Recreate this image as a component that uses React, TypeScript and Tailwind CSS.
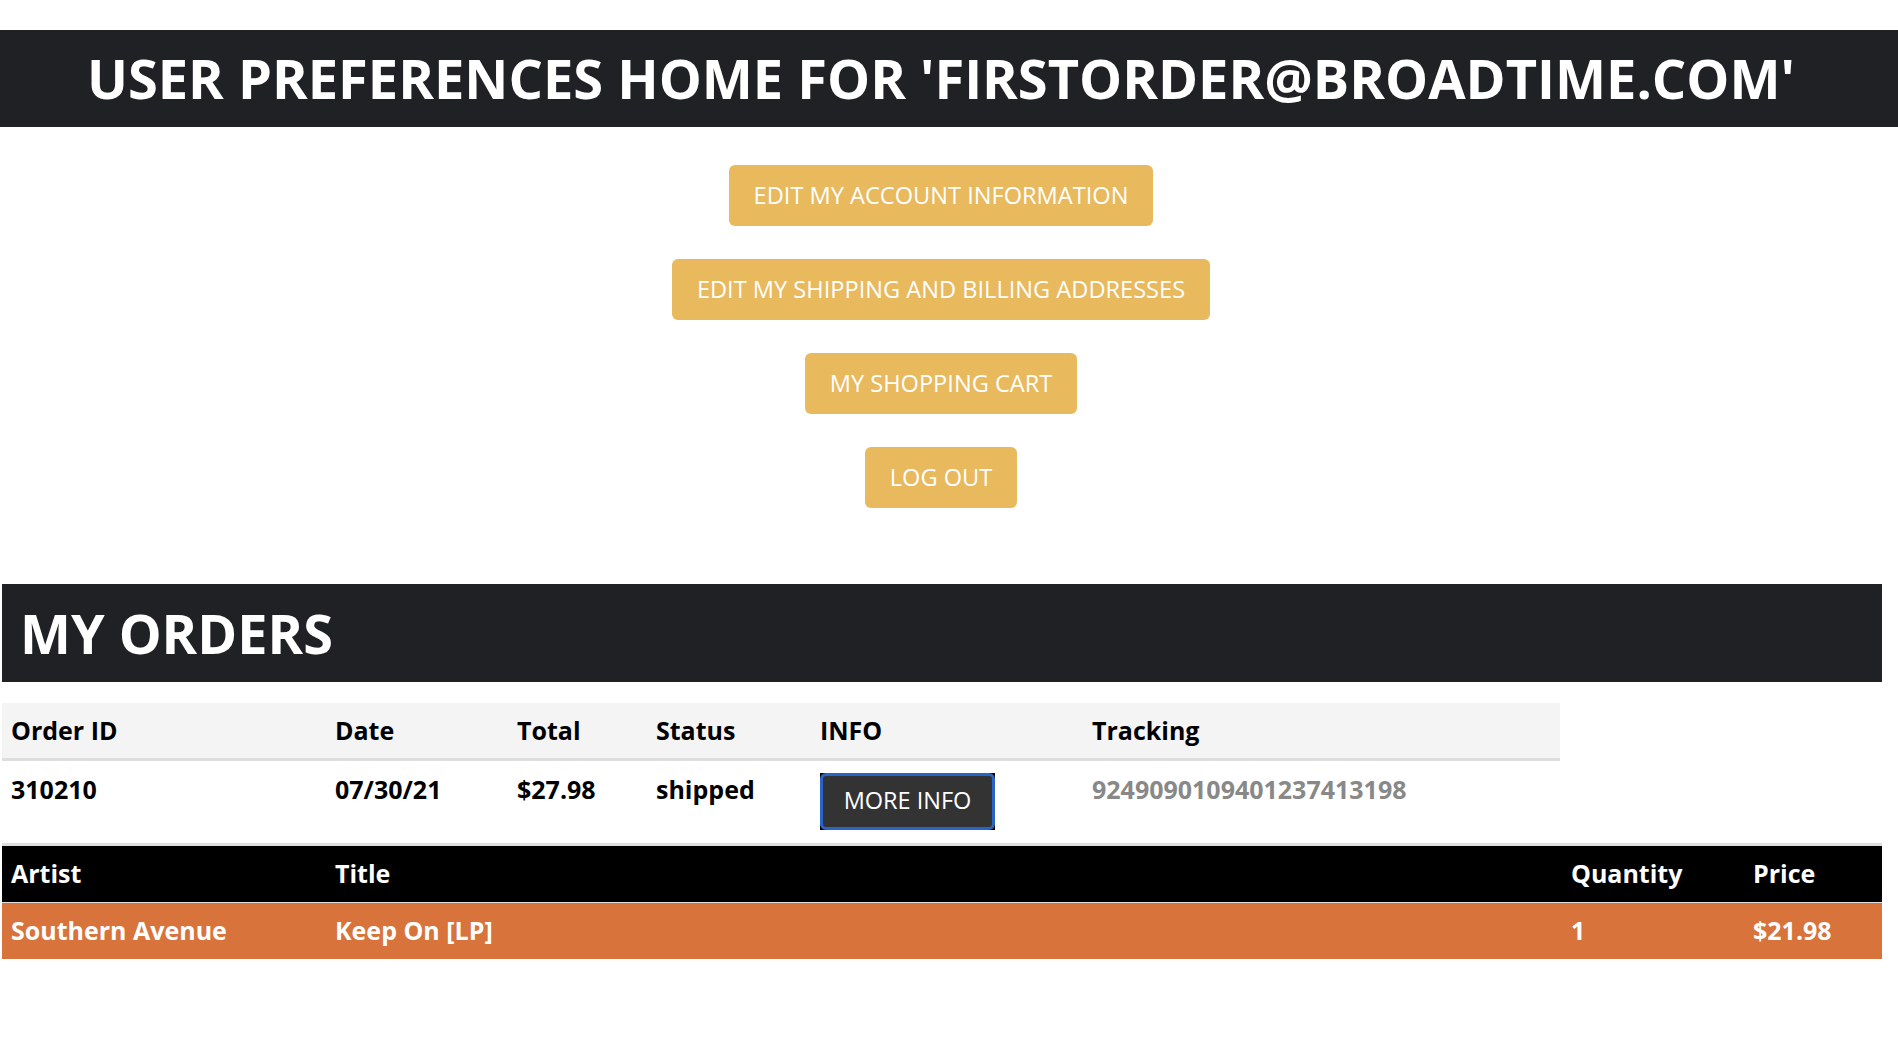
const menu = [
  "EDIT MY ACCOUNT INFORMATION",
  "EDIT MY SHIPPING AND BILLING ADDRESSES",
  "MY SHOPPING CART",
  "LOG OUT",
];

function OrdersTable() {
  return (
    <table className="table-fixed border-collapse text-[25px] font-bold text-black w-[1558px]">
      <colgroup>
        <col className="w-[324px]" />
        <col className="w-[182px]" />
        <col className="w-[139px]" />
        <col className="w-[164px]" />
        <col className="w-[272px]" />
        <col className="w-[477px]" />
      </colgroup>
      <thead>
        <tr className="bg-[#f4f4f4] border-b-[3px] border-[#dedede] h-[56px]">
          {["Order ID", "Date", "Total", "Status", "INFO", "Tracking"].map((h) => (
            <th key={h} className="text-left font-bold pl-[9px] align-middle">
              {h}
            </th>
          ))}
        </tr>
      </thead>
      <tbody>
        <tr className="h-[84px] align-top">
          <td className="pl-[9px] pt-[10px]">310210</td>
          <td className="pl-[9px] pt-[10px]">07/30/21</td>
          <td className="pl-[9px] pt-[10px]">$27.98</td>
          <td className="pl-[9px] pt-[10px]">shipped</td>
          <td className="pl-[9px] pt-[12px]">
            {/* focus ring left on from the last click */}
            <span className="inline-block bg-black">
              <button
                type="button"
                className="block w-[175px] h-[57px] rounded-md border-[3px] border-[#2a64c5] bg-[#333333] text-white text-[23.5px] font-normal"
              >
                MORE INFO
              </button>
            </span>
          </td>
          <td className="pl-[9px] pt-[10px] text-[#888888]">9249090109401237413198</td>
        </tr>
      </tbody>
    </table>
  );
}

function ItemsTable() {
  return (
    <table className="table-fixed border-collapse w-full text-[25px] font-bold text-white">
      <colgroup>
        <col className="w-[324px]" />
        <col />
        <col className="w-[182px]" />
        <col className="w-[138px]" />
      </colgroup>
      <thead>
        <tr className="bg-black border-t-[3px] border-b border-[#dedede] h-[58px]">
          {["Artist", "Title", "Quantity", "Price"].map((h) => (
            <th key={h} className="text-left font-bold pl-[9px]">
              {h}
            </th>
          ))}
        </tr>
      </thead>
      <tbody>
        <tr className="bg-[#d7733b] h-[56px]">
          <td className="pl-[9px]">Southern Avenue</td>
          <td className="pl-[9px]">Keep On [LP]</td>
          <td className="pl-[9px]">1</td>
          <td className="pl-[9px]">$21.98</td>
        </tr>
      </tbody>
    </table>
  );
}

export default function App() {
  return (
    <div className="min-h-screen bg-white font-['Open_Sans',sans-serif] pt-[30px]">
      <header className="bg-[#202124] h-[97px] flex items-center justify-center pr-[16px]">
        <h1 className="text-white text-[54.2px] font-bold leading-none">
          USER PREFERENCES HOME FOR 'FIRSTORDER@BROADTIME.COM'
        </h1>
      </header>

      <nav className="flex flex-col items-center gap-[33px] mt-[38px] pr-[16px]">
        {menu.map((label) => (
          <button
            key={label}
            type="button"
            className="h-[61px] px-[25px] rounded-md bg-[#e8b95d] text-white text-[23.6px] leading-none"
          >
            {label}
          </button>
        ))}
      </nav>

      <section className="mt-[76px] pl-[2px] pr-[16px]">
        <div className="bg-[#202124] h-[98px] flex items-center px-[18px]">
          <h2 className="text-white text-[54px] font-bold leading-none">MY ORDERS</h2>
        </div>
        <div className="mt-[21px]">
          <OrdersTable />
        </div>
        <ItemsTable />
      </section>
    </div>
  );
}
